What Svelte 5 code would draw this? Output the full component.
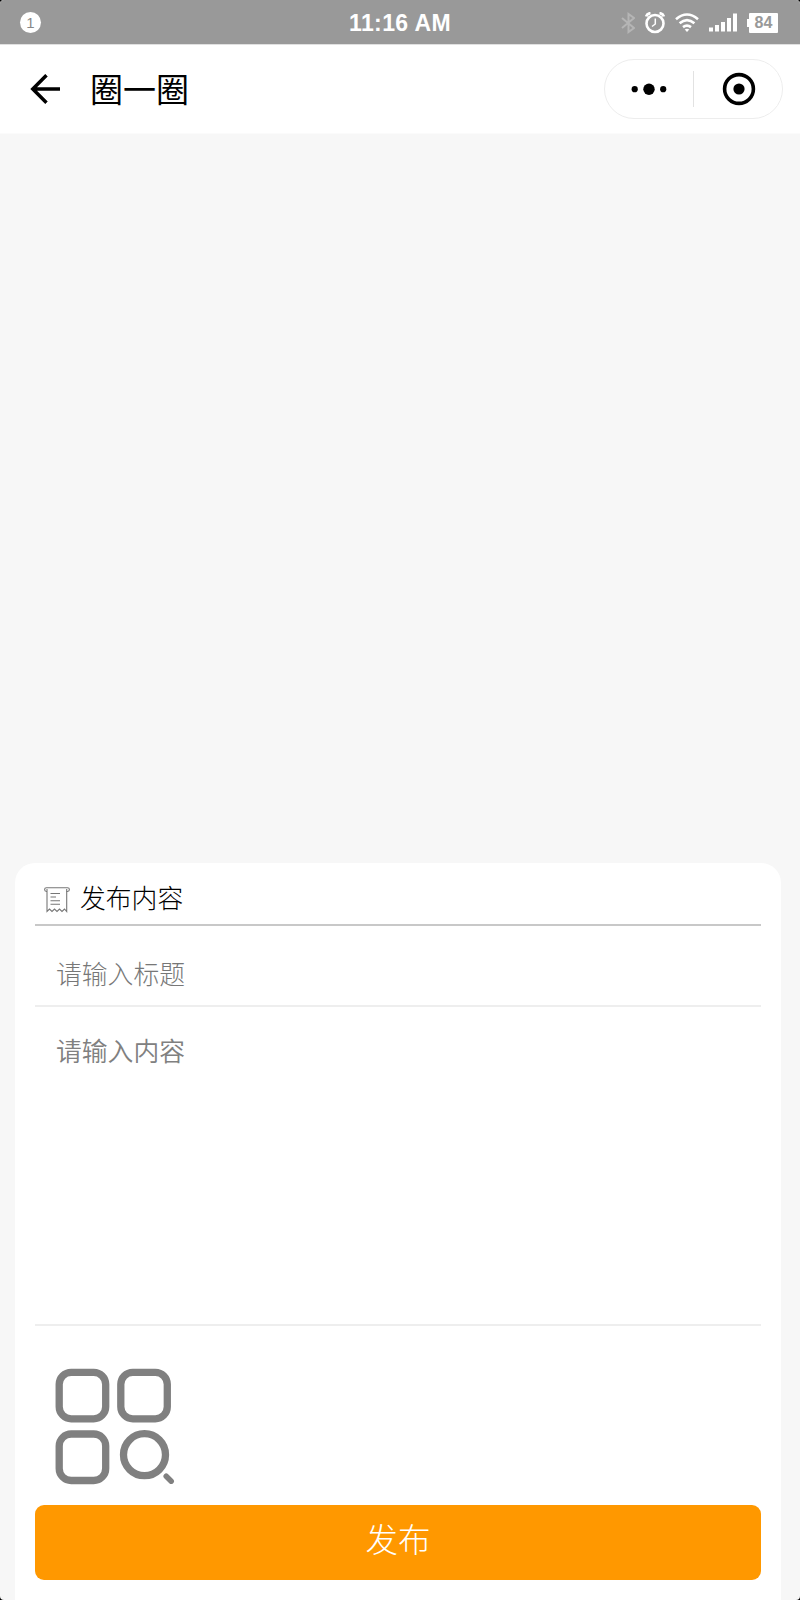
<script lang="ts">
  let title = $state('');
  let content = $state('');
  const battery = 84;
  const notifications = 1;
</script>

<div class="page">
  <header class="status-bar">
    <div class="status-left">
      <span class="notice">{notifications}</span>
    </div>
    <span class="clock">11:16 AM</span>
    <div class="status-icons">
      <svg class="bluetooth" width="14" height="22" viewBox="0 0 14 22" fill="none">
        <path d="M1 6l12 10-5.500 4v-18L13 6 1 16" stroke="#b5b5b5" stroke-width="2" />
      </svg>
      <svg class="alarm" width="20" height="22" viewBox="0 0 20 22" fill="none">
        <path d="M1.200 4.500Q2 1.500 5.500 1.200M18.800 4.500Q18 1.500 14.500 1.200" stroke="#fff" stroke-width="2.800" />
        <circle cx="10" cy="11.500" r="8.500" stroke="#fff" stroke-width="2.600" />
        <path d="M10.300 6.500v5.500L7 14.500" stroke="#fff" stroke-width="1.500" />
      </svg>
      <svg class="wifi" width="24" height="20" viewBox="0 0 24 20" fill="none">
        <path d="M1 6.200Q12-3.200 23 6.200M4.600 10.300Q12 4 19.400 10.300M8 14.100Q12 11 16 14.100" stroke="#fff" stroke-width="2.600" />
        <path d="M9.700 16.500Q12 15 14.300 16.500L12 19z" fill="#fff" />
      </svg>
      <svg class="signal" width="28" height="19" viewBox="0 0 28 19" fill="#fff">
        <rect x="0" y="14.500" width="4" height="4" />
        <rect x="6" y="12" width="4" height="6.500" />
        <rect x="12" y="9" width="4" height="9.500" />
        <rect x="18" y="5" width="4" height="13.500" />
        <rect x="24" y="0.500" width="4" height="18" />
      </svg>
      <span class="battery">{battery}</span>
    </div>
  </header>

  <nav class="nav-bar">
    <svg class="back" width="30" height="30" viewBox="0 0 30 30" fill="none" stroke="#000" stroke-width="3.500">
      <path d="M16.500 1.200L2.800 14.900 16.500 28.700M2.800 14.900H30" />
    </svg>
    <h1>圈一圈</h1>
    <div class="capsule">
      <svg class="more" width="36" height="12" viewBox="0 0 36 12">
        <circle cx="3.700" cy="6.200" r="3.100" />
        <circle cx="18" cy="6.200" r="5.700" />
        <circle cx="32.200" cy="6.200" r="3.100" />
      </svg>
      <span class="separator"></span>
      <svg class="close" width="34" height="34" viewBox="0 0 34 34">
        <circle cx="17" cy="17" r="14.400" fill="none" stroke="#000" stroke-width="3.600" />
        <circle cx="17" cy="17" r="5.600" />
      </svg>
    </div>
  </nav>

  <main>
    <section class="card">
      <div class="card-title">
        <svg width="26" height="26" viewBox="0 0 26 26" fill="none" stroke="#777" stroke-width="1.100">
          <path d="M3 4.500H2.500A1.900 1.900 0 0 1 2.500 .7H23.500A1.900 1.900 0 0 1 23.500 4.500H22.500" />
          <path d="M3 2V24.500L5.500 22 8 24.500 10.500 22 13 24.500 15.500 22 18 24.500 20.500 22 22.700 24.500V2" />
          <path d="M6.500 6.500H16M6.500 10H12M6.500 13.700H16M6.500 17.200H16" />
        </svg>
        <h2>发布内容</h2>
      </div>
      <input class="title-input" type="text" placeholder="请输入标题" bind:value={title} />
      <textarea class="content-input" placeholder="请输入内容" bind:value={content}></textarea>
      <div class="upload">
        <svg width="120" height="118" viewBox="0 0 120 118" fill="none" stroke="#808080" stroke-width="7.300">
          <rect x="4.200" y="4.300" width="46.500" height="46.500" rx="12" />
          <rect x="65.800" y="4.300" width="46.500" height="46.500" rx="12" />
          <rect x="4.200" y="66" width="46.500" height="46.500" rx="12" />
          <circle cx="89.500" cy="86.700" r="21" />
          <path d="M111.200 108.200L116.200 113.200" stroke-width="5.500" stroke-linecap="round" />
        </svg>
      </div>
      <button class="publish" type="button">发布</button>
    </section>
  </main>
</div>

<style>
  :global(body) {
    background: #000;
  }

  .page {
    width: 800px;
    height: 1600px;
    display: flex;
    flex-direction: column;
    overflow: hidden;
    border-radius: 4px;
    background: #f7f7f7;
    font-family: 'Noto Sans CJK SC', sans-serif;
  }

  .status-bar {
    height: 44px;
    box-sizing: border-box;
    padding: 1px 22px 0 20px;
    display: grid;
    grid-template-columns: 1fr auto 1fr;
    align-items: center;
    background: #999;
    color: #fff;
    font-family: 'Liberation Sans', sans-serif;
  }

  .notice {
    display: block;
    width: 21px;
    height: 21px;
    border-radius: 50%;
    background: #fff;
    color: #888;
    font-size: 15px;
    line-height: 21px;
    text-align: center;
  }

  .clock {
    padding: 1px 0 0 2px;
    font-size: 23px;
    font-weight: 700;
    letter-spacing: 0.4px;
  }

  .status-icons {
    display: flex;
    align-items: center;
    justify-content: flex-end;
  }

  .alarm {
    margin-left: 10px;
  }

  .wifi {
    margin-left: 10px;
  }

  .signal {
    margin-left: 10px;
  }

  .battery {
    display: flex;
    align-items: center;
    justify-content: center;
    width: 29px;
    height: 20px;
    margin-left: 12px;
    border-radius: 1px;
    background: #fff;
    color: #999;
    font-size: 16px;
    font-weight: 700;
    line-height: 20px;
  }

  .battery::before {
    content: '';
    width: 3px;
    height: 8px;
    margin-left: -8px;
    margin-right: 5px;
    background: #fff;
  }

  .nav-bar {
    height: 90px;
    box-sizing: border-box;
    padding: 0 17px 0 30px;
    display: flex;
    align-items: center;
    background: #fff;
    border-top: 1px solid #e0e0e0;
    border-bottom: 1px solid #fbfbfb;
  }

  h1 {
    margin: 0 0 0 30px;
    padding-bottom: 3px;
    font-size: 33px;
    font-weight: 400;
    line-height: 48px;
  }

  .capsule {
    width: 179px;
    height: 60px;
    box-sizing: border-box;
    margin-left: auto;
    padding: 0 26px;
    display: flex;
    align-items: center;
    border: 1px solid #ededed;
    border-radius: 30px;
  }

  .separator {
    width: 1px;
    height: 36px;
    margin: 0 28px 0 26px;
    background: #e2e2e2;
  }

  svg {
    display: block;
    flex-shrink: 0;
  }

  main {
    flex: 1;
    padding: 0 19px 0 15px;
    display: flex;
    flex-direction: column;
    justify-content: flex-end;
  }

  .card {
    height: 737px;
    box-sizing: border-box;
    padding: 0 20px;
    border-radius: 20px 20px 0 0;
    background: #fff;
    display: flex;
    flex-direction: column;
  }

  .card-title {
    height: 63px;
    box-sizing: border-box;
    padding: 13px 0 0 9px;
    display: flex;
    align-items: center;
    gap: 10px;
    border-bottom: 2px solid #c8c8c8;
  }

  h2 {
    margin: 0;
    padding-bottom: 6px;
    font-size: 25.8px;
    font-weight: 300;
    line-height: 38px;
  }

  .title-input,
  .content-input {
    box-sizing: border-box;
    width: 100%;
    border: 0;
    border-bottom: 2px solid #eee;
    border-radius: 0;
    outline: none;
    background: transparent;
    font-family: inherit;
    font-size: 25.8px;
    font-weight: 300;
    line-height: 38px;
  }

  .title-input {
    height: 81px;
    padding: 14px 21px 0;
  }

  .content-input {
    height: 319px;
    padding: 24px 21px 0;
    font-weight: 350;
    resize: none;
  }

  .title-input::placeholder,
  .content-input::placeholder {
    color: #777;
    opacity: 1;
  }

  .content-input::placeholder {
    color: #808080;
  }

  .upload {
    height: 179px;
    box-sizing: border-box;
    padding: 42px 0 0 20px;
  }

  .publish {
    height: 75px;
    padding: 0 0 10px;
    border: 0;
    border-radius: 9px;
    background: #ff9800;
    color: #fff;
    font-family: inherit;
    font-size: 32.5px;
    font-weight: 300;
    line-height: 48px;
  }
</style>
